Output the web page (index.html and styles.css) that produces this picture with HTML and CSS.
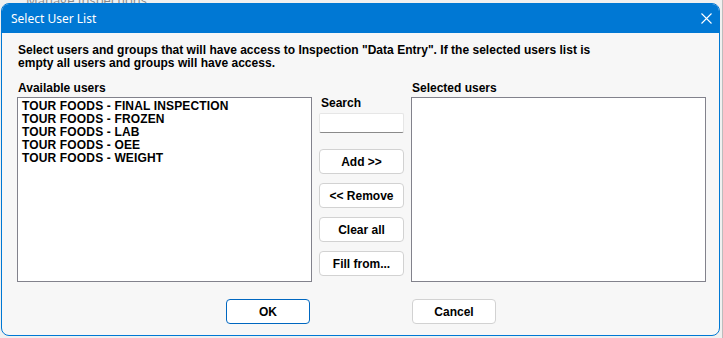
FILE: index.html
```html
<!DOCTYPE html>
<html>
<head>
    <meta charset="UTF-8">
    <title>Select User List</title>
    <link rel="stylesheet" href="styles.css">
</head>
<body>
    <div class="behind">
        <div class="behind-title">Manage Inspections</div>
    </div>

    <div class="dialog">
        <div class="titlebar">
            <span class="title">Select User List</span>
            <svg class="close" width="11" height="11" viewBox="0 0 11 11">
                <path d="M0.5 0.5 L10.5 10.5 M10.5 0.5 L0.5 10.5" stroke="#fff" stroke-width="1.1" fill="none"/>
            </svg>
        </div>

        <div class="content">
            <p class="intro">Select users and groups that will have access to Inspection "Data Entry". If the selected users list is<br>empty all users and groups will have access.</p>

            <div class="lists">
                <div class="label">Available users</div>
                <div></div>
                <div class="label">Selected users</div>

                <div class="listbox">
                    <div class="item">TOUR FOODS - FINAL INSPECTION</div>
                    <div class="item">TOUR FOODS - FROZEN</div>
                    <div class="item">TOUR FOODS - LAB</div>
                    <div class="item">TOUR FOODS - OEE</div>
                    <div class="item">TOUR FOODS - WEIGHT</div>
                </div>

                <div class="middle">
                    <div class="search-label">Search</div>
                    <input type="text" class="search">
                    <button class="btn first">Add &gt;&gt;</button>
                    <button class="btn">&lt;&lt; Remove</button>
                    <button class="btn">Clear all</button>
                    <button class="btn">Fill from...</button>
                </div>

                <div class="listbox"></div>
            </div>

            <div class="footer">
                <button class="btn ok">OK</button>
                <button class="btn cancel">Cancel</button>
            </div>
        </div>
    </div>
</body>
</html>
```

FILE: styles.css
```css
body { margin: 0; background: #e4e4e4; font-family: "Liberation Sans", Arial, sans-serif; overflow: hidden; }
.behind { position: absolute; left: 0; top: 0; width: 723px; height: 338px; background: #f0f0f0; border-right: 1px solid #bdbdbd; box-sizing: border-box; }
.behind-title { position: absolute; left: 26px; top: -9px; font-family: "Open Sans", sans-serif; font-size: 13px; color: #8a8a8a; }
.dialog { position: absolute; left: 1px; top: 3px; width: 719px; height: 333px; box-sizing: border-box; border: 1px solid #0078d4; border-radius: 8px; background: #f7f7f7; overflow: hidden; }
.titlebar { height: 29px; background: #0078d4; display: flex; align-items: center; justify-content: space-between; padding: 0 7px 0 9px; }
.title { color: #fff; font-family: "Noto Sans", sans-serif; font-size: 12px; padding-bottom: 1px; }
.close { display: block; margin-bottom: 1px; }
.content { padding: 11px 12px 0 15px; }
.intro { margin: 0; font-size: 12px; line-height: 13px; font-weight: bold; color: #000; padding-left: 1px; letter-spacing: 0.02px; }
.lists { display: grid; grid-template-columns: 295px 85px 295px; column-gap: 7px; margin-top: 12px; }
.label { font-size: 12px; line-height: 13px; font-weight: bold; padding-left: 1px; margin-bottom: 2px; }
.listbox { height: 185px; background: #fff; border: 1px solid #82828c; box-sizing: border-box; padding: 2px 4px; }
.item { font-size: 12px; line-height: 13px; font-weight: bold; white-space: nowrap; letter-spacing: 0.15px; }
.middle { display: flex; flex-direction: column; }
.search-label { font-size: 12px; line-height: 13px; font-weight: bold; padding-left: 2px; }
.search { height: 20px; margin-top: 3px; box-sizing: border-box; border: 1px solid #e6e6e6; border-bottom-color: #8a8a8a; border-radius: 2px; background: #fff; padding: 0 3px; }
.btn { height: 25px; width: 85px; margin-top: 9px; background: #fff; border: 1px solid #d2d2d2; border-radius: 4px; font-family: "Liberation Sans", Arial, sans-serif; font-size: 12px; font-weight: bold; color: #000; padding: 0; }
.btn.first { margin-top: 16px; }
.footer { display: flex; margin-top: 17px; }
.btn.ok { margin: 0 0 0 209px; width: 84px; border-color: #0067c0; }
.btn.cancel { margin: 0 0 0 102px; width: 84px; }
```
